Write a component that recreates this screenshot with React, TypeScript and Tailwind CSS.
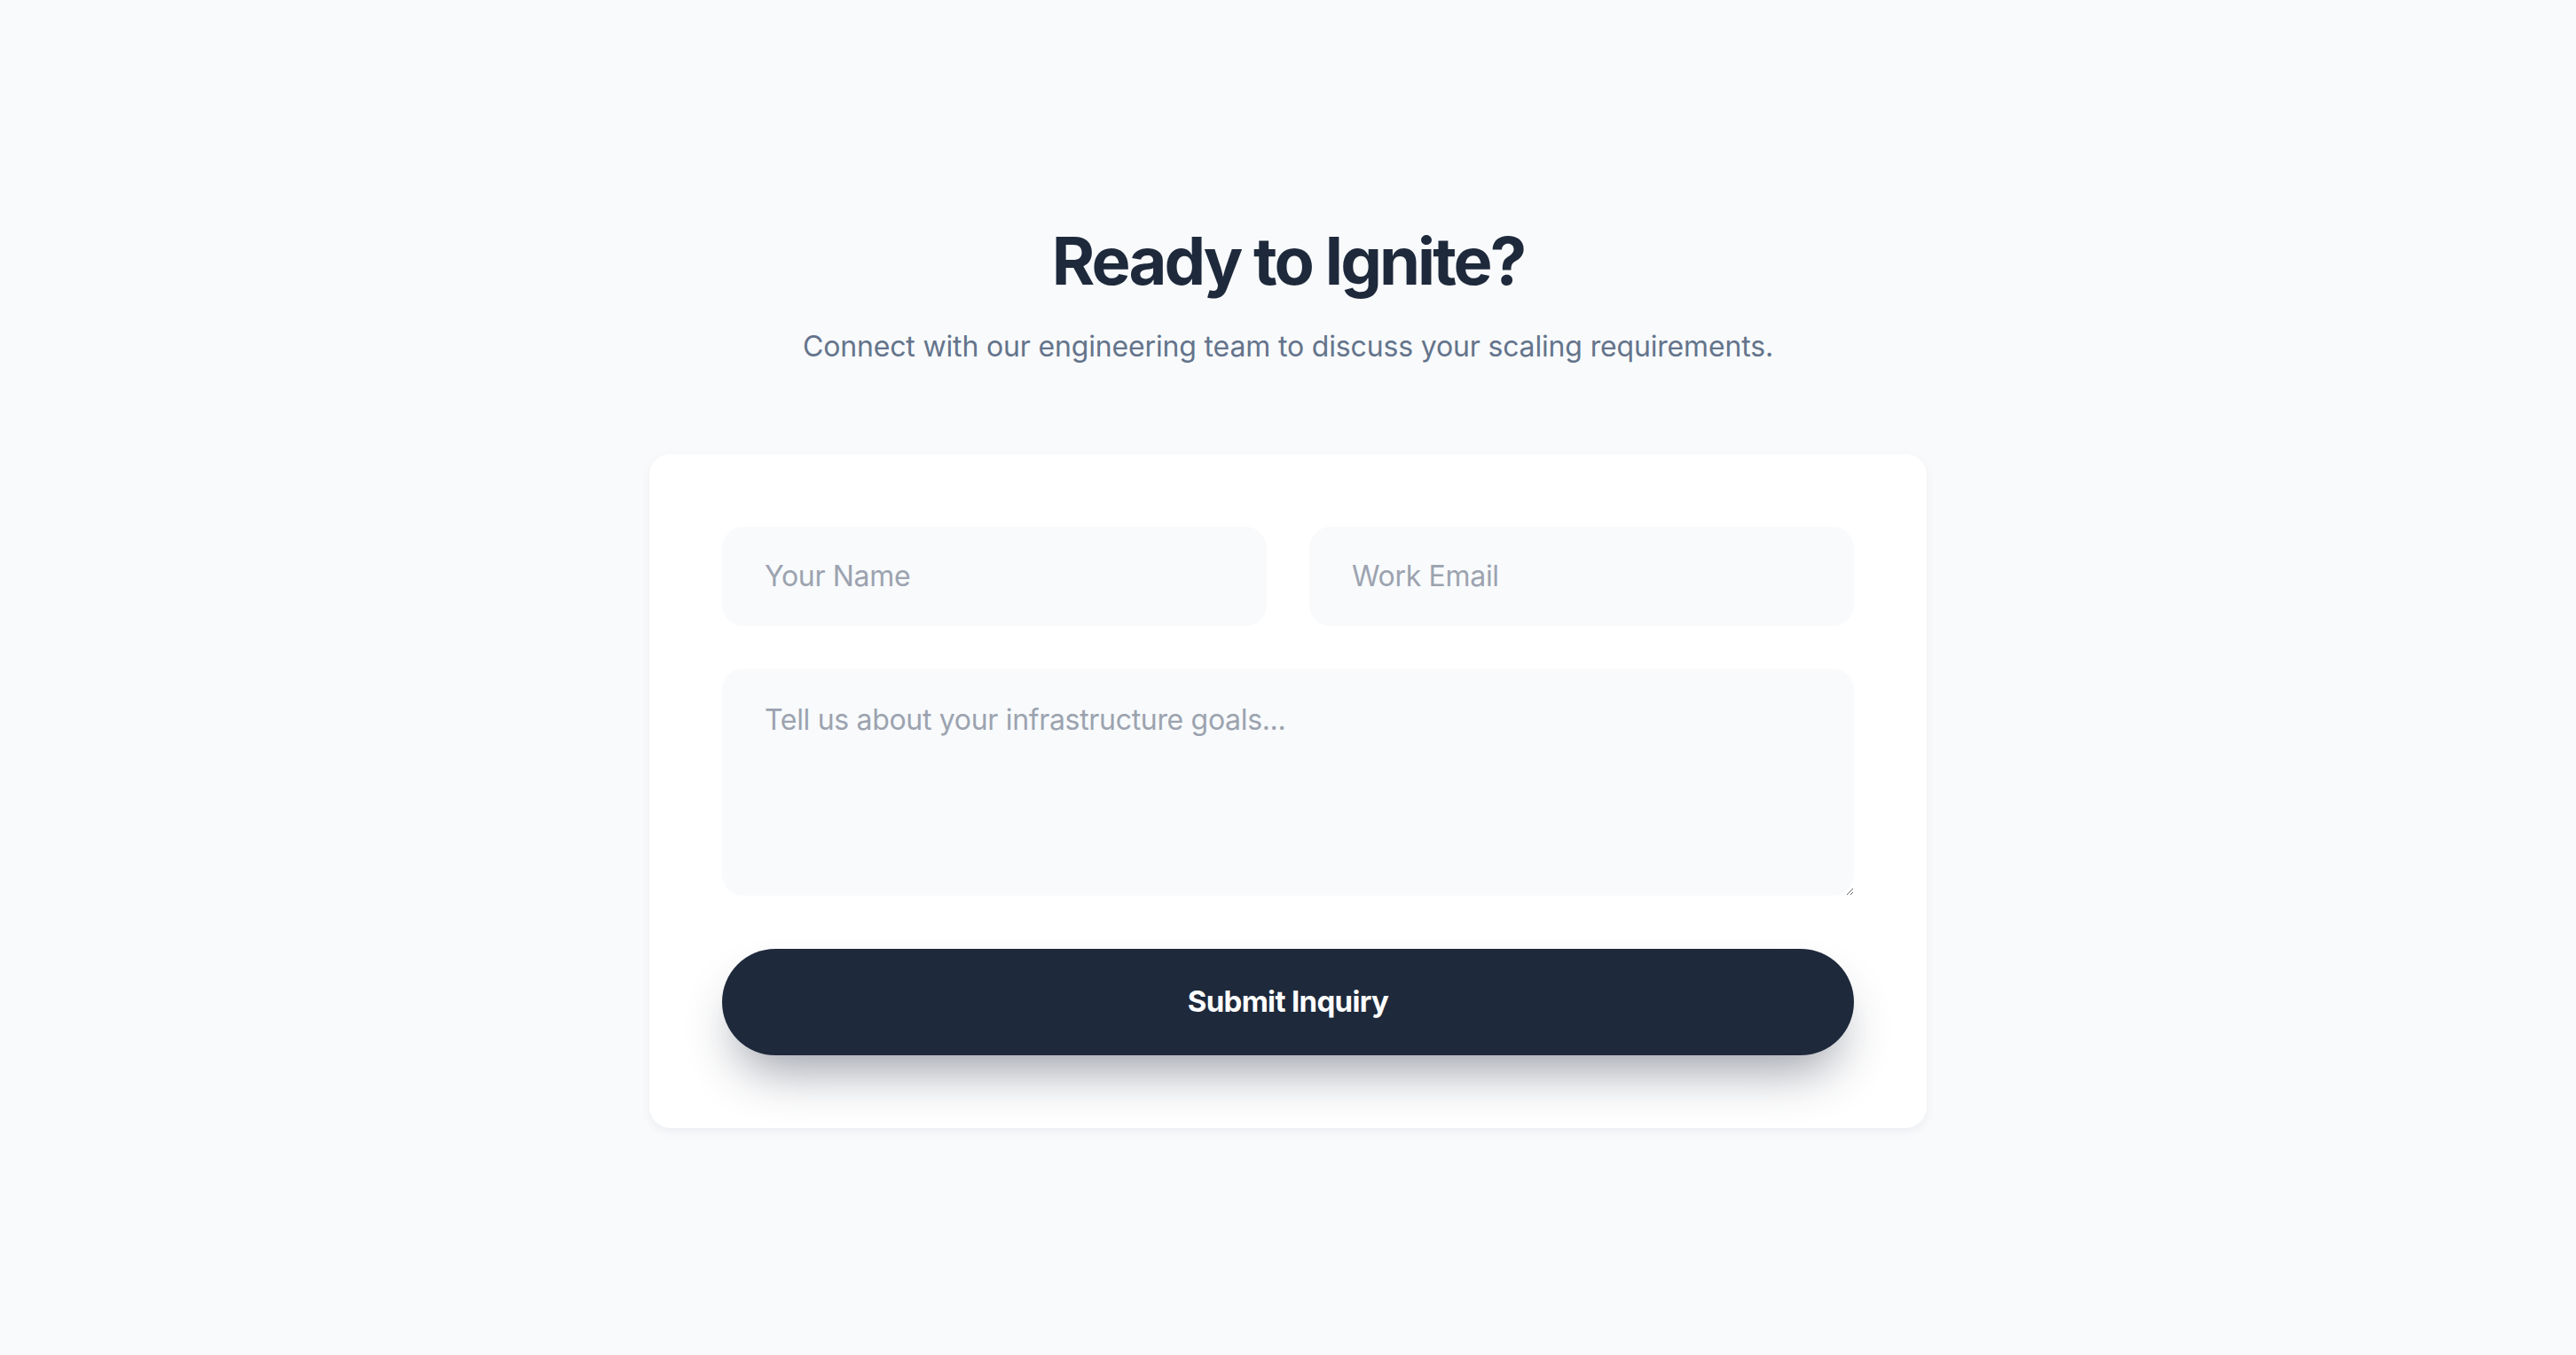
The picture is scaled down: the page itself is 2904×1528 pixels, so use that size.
export default function App() {
  return (
    <div
      className="min-h-screen w-full bg-[#f8fafc] flex flex-col items-center justify-center"
      style={{ fontFamily: "Inter, 'Noto Sans', sans-serif" }}
    >
      <h1 className="text-[74px] leading-none font-bold tracking-[-0.04em] text-[#1e293b]">
        Ready to Ignite?
      </h1>
      <p className="mt-[44px] text-[32px] leading-none text-[#64748b] tracking-[-0.005em]">
        Connect with our engineering team to discuss your scaling requirements.
      </p>

      <form
        className="mt-[105px] w-[1440px] bg-white rounded-[24px] p-[82px] shadow-[0_4px_12px_rgba(15,23,42,0.05)] flex flex-col"
        onSubmit={(e) => e.preventDefault()}
      >
        <div className="grid grid-cols-2 gap-[48px]">
          <input
            type="text"
            placeholder="Your Name"
            className="h-[112px] rounded-[24px] bg-[#f8fafc] px-[48px] text-[32px] text-[#1e293b] placeholder:text-[#9ca3af] outline-none tracking-[-0.01em]"
          />
          <input
            type="email"
            placeholder="Work Email"
            className="h-[112px] rounded-[24px] bg-[#f8fafc] px-[48px] text-[32px] text-[#1e293b] placeholder:text-[#9ca3af] outline-none tracking-[-0.01em]"
          />
        </div>
        <textarea
          placeholder="Tell us about your infrastructure goals..."
          className="mt-[48px] h-[256px] rounded-[24px] bg-[#f8fafc] px-[48px] pt-[38px] text-[32px] leading-[40px] text-[#1e293b] placeholder:text-[#9ca3af] outline-none tracking-[-0.01em]"
        />
        <button
          type="submit"
          className="mt-[60px] h-[120px] rounded-full bg-[#1e293b] text-white text-[33px] font-bold tracking-[-0.02em] shadow-[0_32px_56px_-16px_rgba(30,41,59,0.45)]"
        >
          Submit Inquiry
        </button>
      </form>
    </div>
  );
}
